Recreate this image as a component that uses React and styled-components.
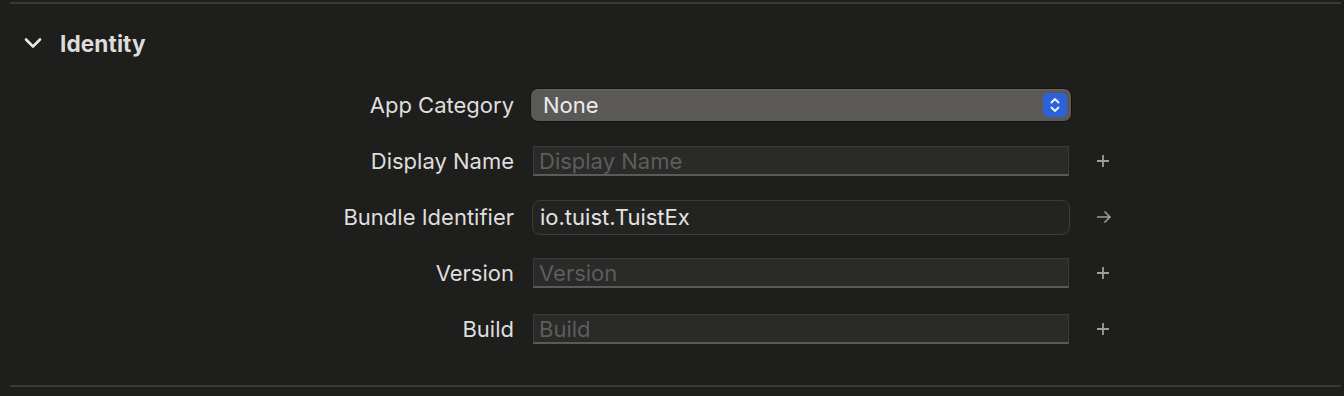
import React from "react";
import styled, { createGlobalStyle } from "styled-components";

const Global = createGlobalStyle`
  html, body { margin: 0; padding: 0; background: #1e1e1d; }
  body { font-family: Inter, "Noto Sans", "Liberation Sans", sans-serif; -webkit-font-smoothing: antialiased; }
`;

const Page = styled.div`
  width: 1344px;
  height: 396px;
  background: #1e1e1d;
  padding-top: 2px;
  box-sizing: border-box;
  overflow: hidden;
`;

const Rule = styled.div`
  height: 2px;
  margin: 0 3px 0 10px;
  background: #393938;
`;

const Header = styled.div`
  height: 78px;
  display: flex;
  align-items: center;
  gap: 18px;
  padding-left: 24px;
  box-sizing: border-box;
`;

const Title = styled.span`
  font-size: 22.6px;
  font-weight: 700;
  color: #dcdcdb;
  letter-spacing: 0.1px;
`;

const Form = styled.div`
  display: grid;
  grid-template-columns: 514px 540px 40px;
  column-gap: 17px;
  row-gap: 20px;
  grid-auto-rows: 36px;
  align-items: center;
  margin-top: 5px;
  margin-bottom: 38px;
`;

const Label = styled.div`
  text-align: right;
  font-size: 22px;
  color: #dededd;
`;

const Popup = styled.div`
  height: 32px;
  border-radius: 7px;
  background: #5a5957;
  box-shadow: 0 0 0 1px rgba(0, 0, 0, 0.35), inset 0 1px 0 rgba(255, 255, 255, 0.08);
  display: flex;
  align-items: center;
  justify-content: space-between;
  padding: 0 4px 0 12px;
  font-size: 22px;
  color: #ececeb;
`;

const Stepper = styled.div`
  width: 24px;
  height: 24px;
  border-radius: 5px;
  background: #2b62d9;
  display: flex;
  align-items: center;
  justify-content: center;
`;

const Field = styled.div`
  height: ${(p) => (p.$rounded ? "35px" : "30px")};
  margin: 0 ${(p) => (p.$rounded ? "1px" : "2px")};
  box-sizing: border-box;
  display: flex;
  align-items: center;
  padding-left: ${(p) => (p.$rounded ? "7px" : "5px")};
  font-size: 22px;
  color: ${(p) => (p.$placeholder ? "#5d5d5c" : "#e3e3e2")};
  background: ${(p) => (p.$rounded ? "#232322" : "#2a2a29")};
  border: 1px solid #3b3b3a;
  border-bottom-color: ${(p) => (p.$rounded ? "#3b3b3a" : "#5a5a59")};
  border-bottom-width: ${(p) => (p.$rounded ? "1px" : "2px")};
  border-radius: ${(p) => (p.$rounded ? "8px" : "0")};
`;

const Accessory = styled.div`
  display: flex;
  align-items: center;
  padding-left: 8px;
`;

const Chevron = () => (
  <svg width="18" height="12" viewBox="0 0 18 12">
    <path d="M2 2.5 L9 9.5 L16 2.5" fill="none" stroke="#e8e8e7" strokeWidth="2.6" strokeLinecap="round" strokeLinejoin="round" />
  </svg>
);

const UpDown = () => (
  <svg width="12" height="18" viewBox="0 0 12 18">
    <path d="M2.5 6.5 L6 3 L9.5 6.5 M2.5 11.5 L6 15 L9.5 11.5" fill="none" stroke="#e8ecf8" strokeWidth="2" strokeLinecap="round" strokeLinejoin="round" />
  </svg>
);

const Plus = () => (
  <svg width="14" height="14" viewBox="0 0 14 14">
    <path d="M7 1 V13 M1 7 H13" stroke="#9d9d9c" strokeWidth="1.8" />
  </svg>
);

const Arrow = () => (
  <svg width="16" height="14" viewBox="0 0 16 14">
    <path d="M1 7 H14 M8.5 1.5 L14 7 L8.5 12.5" fill="none" stroke="#9d9d9c" strokeWidth="1.6" />
  </svg>
);

const rows = [
  { label: "Display Name", placeholder: "Display Name" },
  { label: "Bundle Identifier", value: "io.tuist.TuistEx", rounded: true, arrow: true },
  { label: "Version", placeholder: "Version" },
  { label: "Build", placeholder: "Build" },
];

export default function App() {
  return (
    <Page>
      <Global />
      <Rule />
      <Header>
        <Chevron />
        <Title>Identity</Title>
      </Header>
      <Form>
        <Label>App Category</Label>
        <Popup>
          <span>None</span>
          <Stepper>
            <UpDown />
          </Stepper>
        </Popup>
        <div />
        {rows.map((r) => (
          <React.Fragment key={r.label}>
            <Label>{r.label}</Label>
            <Field $rounded={r.rounded} $placeholder={!r.value}>
              {r.value || r.placeholder}
            </Field>
            <Accessory>{r.arrow ? <Arrow /> : <Plus />}</Accessory>
          </React.Fragment>
        ))}
      </Form>
      <Rule />
    </Page>
  );
}
